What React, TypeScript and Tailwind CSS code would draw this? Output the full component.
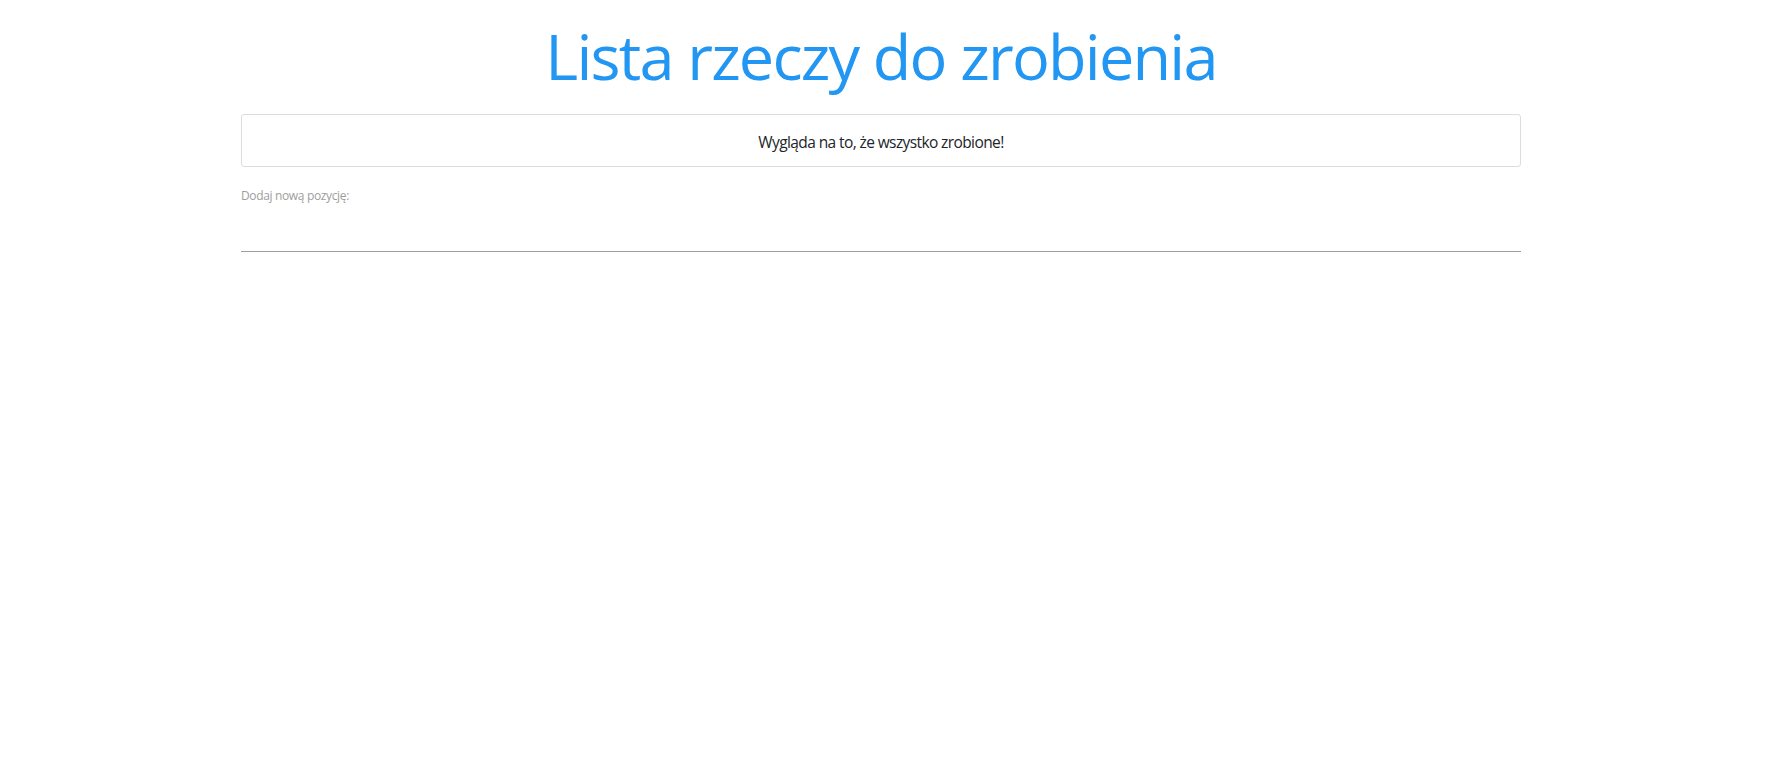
import React from "react";

export default function App() {
  return (
    <div className="min-h-screen bg-white" style={{ fontFamily: '"Open Sans", "Noto Sans", sans-serif' }}>
      <div className="ml-[241px] w-[1280px]">
        <h1 className="mt-[24px] text-center text-[63px] leading-[64px] font-normal tracking-[-1.8px] text-[#2196f3]">
          Lista rzeczy do zrobienia
        </h1>
        <div className="mt-[26px] rounded-[3px] border border-[#dddddd] pt-[15px] pb-[12px] text-center text-[15.5px] leading-[24px] tracking-[-0.6px] text-[#212529]">
          Wygląda na to, że wszystko zrobione!
        </div>
        <div className="mt-[21px]">
          <label className="block text-[12px] leading-[16px] tracking-[-0.35px] text-[#9e9e9e]">Dodaj nową pozycję:</label>
          <input
            type="text"
            className="block h-[48px] w-full border-b border-[#9e9e9e] bg-transparent text-[16px] text-[#212529] outline-none"
          />
        </div>
      </div>
    </div>
  );
}
